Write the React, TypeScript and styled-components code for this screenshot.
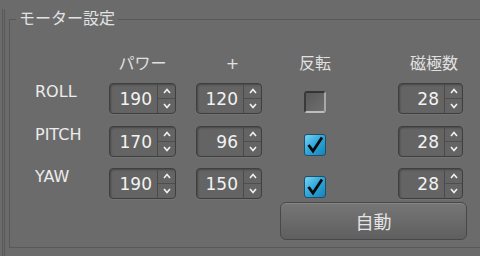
import styled, { createGlobalStyle } from 'styled-components'

const Global = createGlobalStyle`
  html, body {
    margin: 0;
    padding: 0;
    background: #6b6b6b;
    overflow: hidden;
  }
  body {
    width: 480px;
    height: 256px;
    font-family: "DejaVu Sans", "Noto Sans CJK JP", sans-serif;
    color: #e6e6e6;
  }
`

const Outer = styled.div`
  margin-left: 2px;
  width: 478px;
  height: 256px;
  border-left: 3px double #585858;
  box-sizing: border-box;
`

const Group = styled.fieldset`
  margin: 9px 0 0 4px;
  padding: 0 0 7px 0;
  width: 471px;
  box-sizing: border-box;
  border: 1px solid #585858;
  border-right: none;
`

const Title = styled.legend`
  margin-left: 6px;
  padding: 0 3px;
  font-size: 16px;
  line-height: 20px;
  color: #e2e2e2;
`

const Grid = styled.div`
  margin: 23px 0 0 25px;
  display: grid;
  grid-template-columns: 74px 67px 20px 66px 42px 22px 72px 65px;
  grid-template-rows: 24px 7px 31px 12px 31px 11px 31px;
`

const Head = styled.div<{ $col: number; $shift?: number }>`
  grid-column: ${(p) => p.$col};
  grid-row: 1;
  justify-self: center;
  margin-left: ${(p) => p.$shift ?? 0}px;
  font-size: 16px;
  line-height: 24px;
  white-space: nowrap;
  color: #e0e0e0;
`

const Label = styled.div<{ $row: number }>`
  grid-column: 1;
  grid-row: ${(p) => p.$row};
  align-self: start;
  font-size: 16px;
  line-height: 18px;
  color: #ececec;
`

const Spin = styled.div<{ $col: number; $row: number; $w: number }>`
  grid-column: ${(p) => p.$col};
  grid-row: ${(p) => p.$row};
  width: ${(p) => p.$w}px;
  height: 31px;
  box-sizing: border-box;
  display: flex;
  border: 1px solid #3f3f3f;
  border-radius: 4px;
  background: #646464;
  box-shadow: inset 1px 1px 2px rgba(0, 0, 0, 0.3), 0 1px 0 rgba(255, 255, 255, 0.06);
`

const SpinValue = styled.div`
  flex: 1;
  display: flex;
  align-items: center;
  justify-content: flex-end;
  padding-right: 5px;
  font-size: 17px;
  color: #f2f2f2;
`

const SpinArrows = styled.div`
  width: 17px;
  display: flex;
  flex-direction: column;
  border-left: 1px solid #4a4a4a;
`

const Arrow = styled.div`
  flex: 1;
  display: flex;
  align-items: center;
  justify-content: center;
  & + & {
    border-top: 1px solid #4e4e4e;
  }
`

const Check = styled.div<{ $row: number; $on: boolean }>`
  grid-column: 6;
  grid-row: ${(p) => p.$row};
  align-self: start;
  margin-top: 8px;
  width: 22px;
  height: 22px;
  box-sizing: border-box;
  border-radius: 3px;
  display: flex;
  align-items: center;
  justify-content: center;
  ${(p) =>
    p.$on
      ? `
    border: 1px solid #1d4f66;
    background: linear-gradient(135deg, #7ad3f5 0%, #34a9dc 45%, #1682b6 100%);
  `
      : `
    border-style: solid;
    border-width: 2px;
    border-color: #353535 #a8a8a8 #bdbdbd #3a3a3a;
    background: linear-gradient(135deg, #5a5a5a, #6e6e6e);
  `}
`

const ButtonRow = styled.div`
  display: flex;
  padding-left: 270px;
  margin-top: 3px;
`

const AutoButton = styled.button`
  width: 187px;
  height: 38px;
  border: 1px solid #484848;
  border-radius: 6px;
  background: linear-gradient(#767676, #5f5f5f);
  box-shadow: inset 0 1px 0 rgba(255, 255, 255, 0.12);
  font-family: "Noto Sans CJK JP", sans-serif;
  font-size: 18px;
  color: #e4e4e4;
  padding: 0;
`

const Up = () => (
  <svg width="8" height="6" viewBox="0 0 8 6">
    <path d="M1 5 L4 1.5 L7 5" fill="none" stroke="#f0f0f0" strokeWidth="1.6" />
  </svg>
)

const Down = () => (
  <svg width="8" height="6" viewBox="0 0 8 6">
    <path d="M1 1 L4 4.5 L7 1" fill="none" stroke="#f0f0f0" strokeWidth="1.6" />
  </svg>
)

const Tick = () => (
  <svg width="18" height="18" viewBox="0 0 18 18">
    <path d="M2.5 9 L7 15 L16 1.5" fill="none" stroke="#0a0a0a" strokeWidth="2.8" strokeLinejoin="miter" />
  </svg>
)

const rows = [
  { name: 'ROLL', power: 190, plus: 120, rev: false, poles: 28 },
  { name: 'PITCH', power: 170, plus: 96, rev: true, poles: 28 },
  { name: 'YAW', power: 190, plus: 150, rev: true, poles: 28 },
]

const SpinBox = ({ col, row, w, value }: { col: number; row: number; w: number; value: number }) => (
  <Spin $col={col} $row={row} $w={w}>
    <SpinValue>{value}</SpinValue>
    <SpinArrows>
      <Arrow><Up /></Arrow>
      <Arrow><Down /></Arrow>
    </SpinArrows>
  </Spin>
)

export default function App() {
  return (
    <>
      <Global />
      <Outer>
        <Group>
          <Title>モーター設定</Title>
          <Grid>
            <Head $col={2}>パワー</Head>
            <Head $col={4} $shift={7}>+</Head>
            <Head $col={6}>反転</Head>
            <Head $col={8} $shift={7}>磁極数</Head>
            {rows.map((r, i) => {
              const row = 3 + i * 2
              return [
                <Label key={r.name + 'l'} $row={row}>{r.name}</Label>,
                <SpinBox key={r.name + 'p'} col={2} row={row} w={67} value={r.power} />,
                <SpinBox key={r.name + 'a'} col={4} row={row} w={66} value={r.plus} />,
                <Check key={r.name + 'c'} $row={row} $on={r.rev}>{r.rev && <Tick />}</Check>,
                <SpinBox key={r.name + 'n'} col={8} row={row} w={65} value={r.poles} />,
              ]
            })}
          </Grid>
          <ButtonRow>
            <AutoButton>自動</AutoButton>
          </ButtonRow>
        </Group>
      </Outer>
    </>
  )
}
